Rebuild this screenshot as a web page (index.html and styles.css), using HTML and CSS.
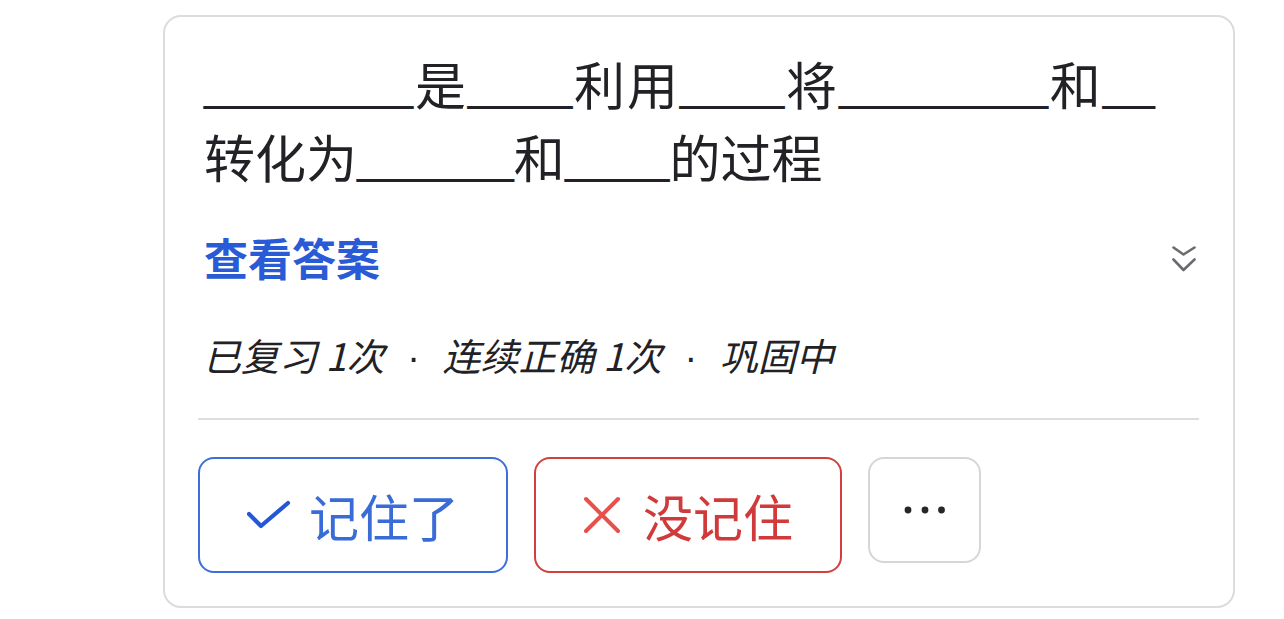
FILE: index.html
```html
<!DOCTYPE html>
<html lang="zh-CN">
<head>
<meta charset="utf-8">
<title>复习卡片</title>
<link rel="stylesheet" href="styles.css">
</head>
<body>
<div class="card">
  <p class="question"><span class="blank">________</span>是<span class="blank">____</span>利用<span class="blank">____</span>将<span class="blank">________</span>和<span class="blank">__</span>转化为<span class="blank">______</span>和<span class="blank">____</span>的过程</p>
  <div class="answer-row">
    <span class="answer-link">查看答案</span>
    <svg class="chevron" width="24" height="28" viewBox="0 0 24 28">
      <polyline points="1.5,2.5 11.5,9.5 22.5,2.5" fill="none" stroke="#6a6a70" stroke-width="2.6" stroke-linecap="round" stroke-linejoin="round"/>
      <polyline points="1.5,14.5 11.5,25 22.5,14.5" fill="none" stroke="#6a6a70" stroke-width="2.6" stroke-linecap="round" stroke-linejoin="round"/>
    </svg>
  </div>
  <p class="stats">已复习 1次<span class="sep"> · </span>连续正确 1次<span class="sep"> · </span>巩固中</p>
  <div class="divider"></div>
  <div class="actions">
    <button class="btn btn-ok">
      <svg class="icon" width="44" height="30" viewBox="0 0 44 30">
        <polyline points="2,14 14,26 41,3" fill="none" stroke="#2456d6" stroke-width="4.2" stroke-linecap="round" stroke-linejoin="round"/>
      </svg>
      <span>记住了</span>
    </button>
    <button class="btn btn-no">
      <svg class="icon" width="38" height="38" viewBox="0 0 38 38">
        <line x1="3" y1="3" x2="35" y2="35" stroke="#e8504c" stroke-width="4" stroke-linecap="round"/>
        <line x1="35" y1="3" x2="3" y2="35" stroke="#e8504c" stroke-width="4" stroke-linecap="round"/>
      </svg>
      <span>没记住</span>
    </button>
    <button class="btn btn-more" aria-label="更多">
      <svg width="42" height="10" viewBox="0 0 42 10">
        <circle cx="4" cy="5" r="3.4" fill="#26262b"/>
        <circle cx="21" cy="5" r="3.4" fill="#26262b"/>
        <circle cx="37.5" cy="5" r="3.4" fill="#26262b"/>
      </svg>
    </button>
  </div>
</div>
</body>
</html>
```

FILE: styles.css
```css
html, body {
  margin: 0;
  padding: 0;
  background: #ffffff;
}

body {
  font-family: "Noto Sans CJK SC", "Liberation Sans", sans-serif;
  color: #222226;
}

.card {
  box-sizing: border-box;
  width: 1072px;
  height: 593px;
  margin: 15px 0 0 163px;
  border: 2px solid #dcdcdf;
  border-radius: 18px;
  padding: 30px 34px 33px 33px;
  display: flex;
  flex-direction: column;
}

.card > * {
  flex-shrink: 0;
}

.question {
  margin: 0;
  padding: 0 44px 0 6px;
  font-family: "Noto Sans CJK SC", sans-serif;
  font-size: 51px;
  line-height: 73px;
  text-align: justify;
  color: #222226;
}

.blank {
  font-family: "Liberation Sans", sans-serif;
  font-size: 47px;
  line-height: 0;
  vertical-align: 5px;
}

.answer-row {
  margin-top: 34px;
  padding-left: 6px;
  display: flex;
  align-items: center;
  justify-content: space-between;
  height: 60px;
}

.answer-link {
  font-size: 44px;
  font-weight: 700;
  color: #2a5bd7;
  line-height: 60px;
}

.chevron {
  display: block;
  margin: 3px 3px 0 0;
}

.stats {
  margin: 42px 0 0 0;
  padding-left: 5px;
  font-size: 38px;
  line-height: 52px;
  height: 52px;
  font-style: italic;
  color: #222226;
}

.sep {
  font-family: "Liberation Sans", sans-serif;
  font-style: normal;
  line-height: 0;
  padding: 0 12px;
}

.divider {
  margin-top: 37px;
  height: 2px;
  background: #dddde0;
}

.actions {
  margin-top: 37px;
  display: flex;
  align-items: flex-start;
  gap: 26px;
}

.btn {
  box-sizing: border-box;
  display: flex;
  align-items: center;
  justify-content: center;
  gap: 18px;
  height: 116px;
  width: 310px;
  background: #ffffff;
  border-radius: 16px;
  padding: 0;
  font-family: "Noto Sans CJK SC", sans-serif;
  font-size: 50px;
  line-height: 1;
}

.btn-ok {
  border: 2.5px solid #3d6fd9;
  color: #3a6cd8;
}

.btn-no {
  width: 308px;
  border: 2.5px solid #d13f3f;
  color: #d03a3a;
  gap: 22px;
}

.btn-more {
  width: 113px;
  height: 106px;
  border: 2.5px solid #d6d6d9;
}

.icon {
  display: block;
}
```
